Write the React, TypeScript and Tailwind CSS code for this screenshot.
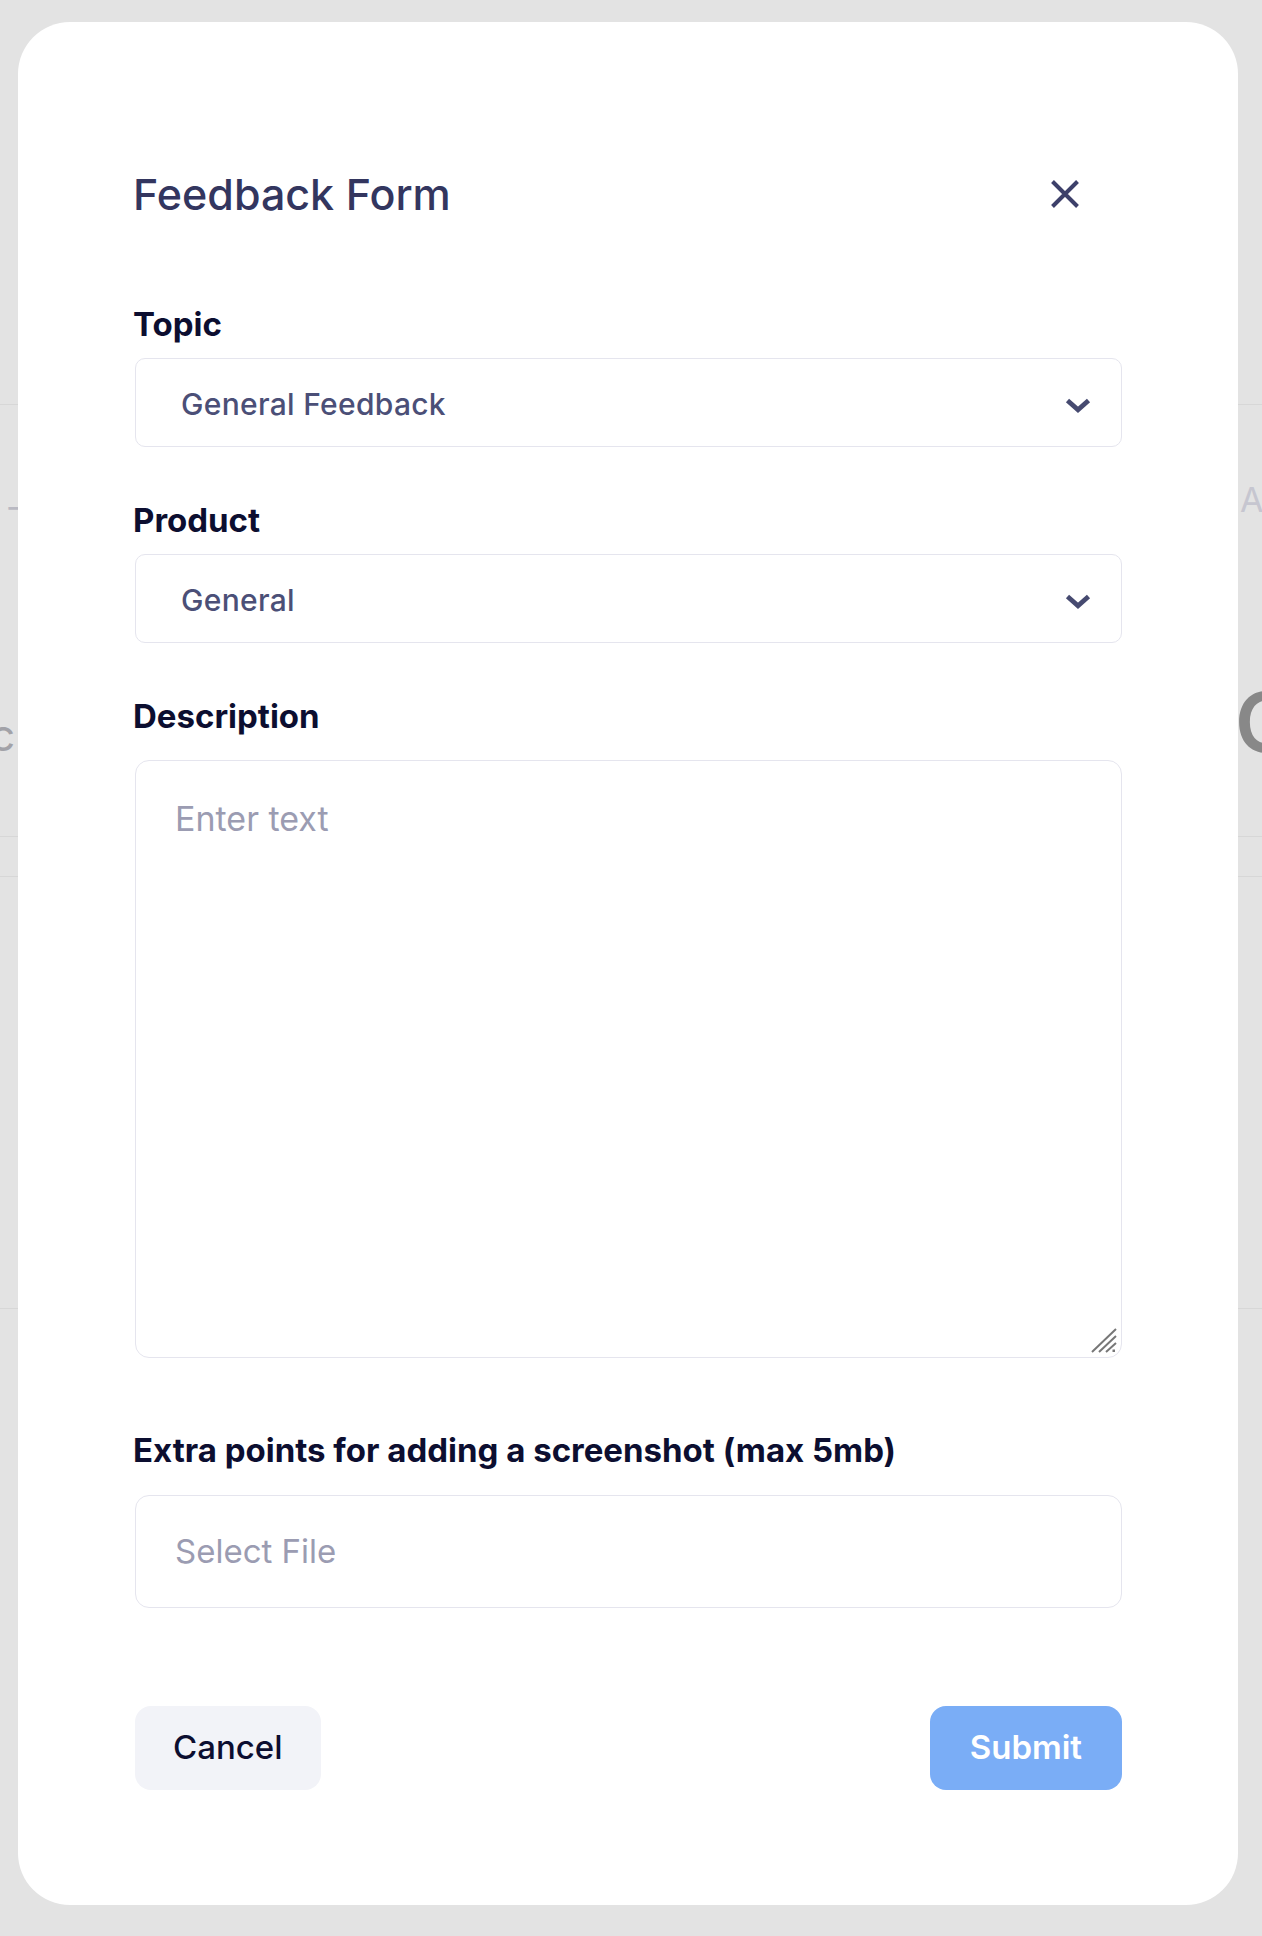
import React, { useState } from 'react';

const font = { fontFamily: 'Inter, "Noto Sans", sans-serif' };

const Chevron = () => (
  <svg width="26" height="16" viewBox="0 0 26 16" fill="none" className="shrink-0">
    <path d="M2.5 3.5 L13 12.8 L23.5 3.5" stroke="#464a70" strokeWidth="4.8" strokeLinejoin="miter" />
  </svg>
);

interface SelectProps {
  label: string;
  value: string;
  options: string[];
  onChange: (v: string) => void;
}

const SelectField: React.FC<SelectProps> = ({ label, value, options, onChange }) => (
  <div className="flex flex-col">
    <label className="ml-[-2px] text-[33px] leading-[40px] font-bold text-[#0c0e30]">{label}</label>
    <div className="relative mt-[14px] h-[89px] rounded-[10px] border-[1.5px] border-[#e5e5ee] bg-white flex items-center justify-between pl-[45px] pr-[30px] pt-[4px]">
      <span className="text-[30px] font-medium tracking-[0.01em] text-[#4b4f77]">{value}</span>
      <Chevron />
      <select
        value={value}
        onChange={(e) => onChange(e.target.value)}
        className="absolute inset-0 opacity-0 cursor-pointer"
      >
        {options.map((o) => (
          <option key={o}>{o}</option>
        ))}
      </select>
    </div>
  </div>
);

export default function App() {
  const [topic, setTopic] = useState('General Feedback');
  const [product, setProduct] = useState('General');
  const [text, setText] = useState('');

  return (
    <div className="relative w-[1262px] h-[1936px] bg-[#e3e3e3] overflow-hidden" style={font}>
      {/* page behind the modal */}
      <div className="flex flex-col h-full">
        <div className="h-[405px] border-b border-[#d7d7d7]" />
        <div className="h-[432px] border-b border-[#d7d7d7] flex justify-between">
          <div className="flex flex-col ml-[6px] pt-[82px]">
            <span className="text-[34px] leading-[40px] text-[#b9b9c2]">-</span>
            <span className="mt-[178px] ml-[-16px] text-[44px] leading-[60px] text-[#a2a2a8]">c</span>
          </div>
          <div className="flex flex-col items-start w-[60px] mr-[-38px] pt-[75px]">
            <span className="text-[34px] leading-[40px] text-[#c6c6d0]">A</span>
            <span className="mt-[158px] ml-[-5px] text-[82px] leading-[90px] font-semibold text-[#888888]">C</span>
          </div>
        </div>
        <div className="h-[40px] border-b border-[#d7d7d7]" />
        <div className="h-[432px] border-b border-[#d7d7d7]" />
      </div>

      {/* modal */}
      <div className="absolute left-[18px] top-[22px] w-[1220px] h-[1883px] rounded-[52px] bg-white pl-[117px] pr-[116px] pt-[142px] flex flex-col">
        <div className="flex items-center justify-between h-[60px]">
          <h2 className="ml-[-2px] text-[43px] leading-[60px] font-medium text-[#33365f]">Feedback Form</h2>
          <button className="mr-[42px] w-[30px] h-[30px] flex items-center justify-center">
            <svg width="30" height="30" viewBox="0 0 30 30" fill="none">
              <path d="M2.5 2.5 L27.5 27.5 M27.5 2.5 L2.5 27.5" stroke="#3d406a" strokeWidth="4" />
            </svg>
          </button>
        </div>

        <div className="mt-[80px]">
          <SelectField
            label="Topic"
            value={topic}
            options={['General Feedback', 'Bug Report', 'Feature Request']}
            onChange={setTopic}
          />
        </div>

        <div className="mt-[53px]">
          <SelectField
            label="Product"
            value={product}
            options={['General', 'Dashboard', 'Mobile App']}
            onChange={setProduct}
          />
        </div>

        <div className="mt-[53px] flex flex-col">
          <label className="ml-[-2px] text-[33px] leading-[40px] font-bold text-[#0c0e30]">Description</label>
          <div className="relative mt-[24px]">
            <textarea
              value={text}
              onChange={(e) => setText(e.target.value)}
              placeholder="Enter text"
              className="block w-full h-[598px] resize-none rounded-[14px] border-[1.5px] border-[#e5e5ee] px-[39px] pt-[38px] text-[34px] leading-[40px] text-[#33365f] placeholder:text-[#9b9cb2] outline-none"
            />
            <svg width="28" height="28" viewBox="0 0 28 28" className="absolute right-[3px] bottom-[3px] pointer-events-none">
              <path d="M1 25 L25 2 M8 25 L25 9 M15 25 L25 16" stroke="#777777" strokeWidth="2" />
              <rect x="21.5" y="22.5" width="2.5" height="2.5" fill="#777777" />
            </svg>
          </div>
        </div>

        <div className="mt-[72px] flex flex-col">
          <label className="ml-[-2px] text-[33px] leading-[40px] font-bold text-[#0c0e30]">
            Extra points for adding a screenshot (max 5mb)
          </label>
          <label className="mt-[25px] h-[113px] rounded-[14px] border-[1.5px] border-[#e5e5ee] flex items-center px-[39px] cursor-pointer">
            <span className="text-[33px] text-[#9b9cb2]">Select File</span>
            <input type="file" className="hidden" />
          </label>
        </div>

        <div className="mt-[98px] flex items-center justify-between">
          <button className="h-[84px] px-[38px] rounded-[16px] bg-[#f2f3f8] text-[33px] font-medium text-[#0c0e30]">
            Cancel
          </button>
          <button className="h-[84px] px-[40px] rounded-[16px] bg-[#7aadf6] text-[33px] font-semibold text-white">
            Submit
          </button>
        </div>
      </div>
    </div>
  );
}
